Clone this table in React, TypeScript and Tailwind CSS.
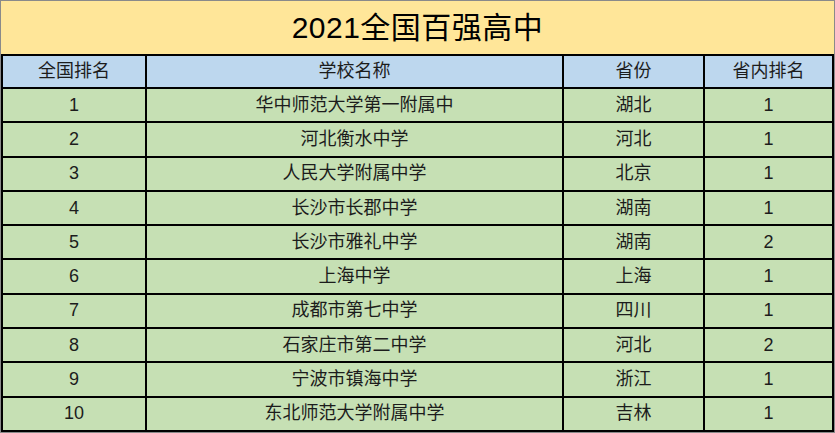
import React from 'react';

const rows: [string, string, string, string][] = [
    ['1', '华中师范大学第一附属中', '湖北', '1'],
    ['2', '河北衡水中学', '河北', '1'],
    ['3', '人民大学附属中学', '北京', '1'],
    ['4', '长沙市长郡中学', '湖南', '1'],
    ['5', '长沙市雅礼中学', '湖南', '2'],
    ['6', '上海中学', '上海', '1'],
    ['7', '成都市第七中学', '四川', '1'],
    ['8', '石家庄市第二中学', '河北', '2'],
    ['9', '宁波市镇海中学', '浙江', '1'],
    ['10', '东北师范大学附属中学', '吉林', '1'],
];

const cols = 'grid grid-cols-[144px_417px_141px_1fr]';

const App: React.FC = () => {
    return (
        <div
            className="w-[835px] h-[433px] bg-white flex flex-col border border-[#8a8a8a] text-[#1c1c1c]"
            style={{ fontFamily: '"Liberation Sans", "Noto Sans CJK SC", sans-serif' }}
        >
            {/* Title */}
            <div className="h-[55px] bg-[#FFE699] flex items-center justify-center border-b-2 border-black">
                <span className="text-[30px] text-black tracking-[0.5px]">2021全国百强高中</span>
            </div>

            <div className="flex-1 flex flex-col border-l-2 border-r-2 border-black">
                {/* Header */}
                <div className={`${cols} h-[33px] bg-[#BDD7EE] text-[18px]`}>
                    {['全国排名', '学校名称', '省份', '省内排名'].map((h, i) => (
                        <div
                            key={h}
                            className={`flex items-center justify-center border-b-2 border-black ${i < 3 ? 'border-r-2' : ''}`}
                        >
                            {h}
                        </div>
                    ))}
                </div>

                {/* Body */}
                <div className="flex-1 grid grid-rows-10 bg-[#C6E0B4] text-[18px]">
                    {rows.map(r => (
                        <div key={r[0]} className={cols}>
                            {r.map((c, i) => (
                                <div
                                    key={i}
                                    className={`flex items-center justify-center border-b-2 border-black ${i < 3 ? 'border-r-2' : ''}`}
                                >
                                    {c}
                                </div>
                            ))}
                        </div>
                    ))}
                </div>
            </div>
        </div>
    );
};

export default App;
